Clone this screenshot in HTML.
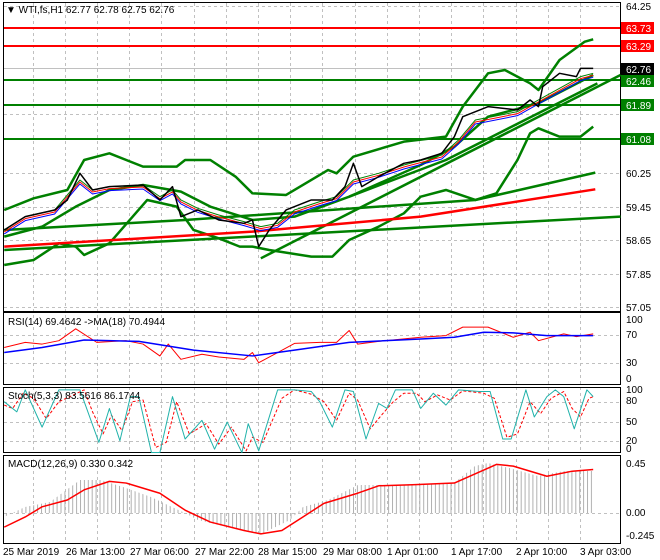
<!DOCTYPE html>
<html><head><meta charset="utf-8"><style>
html,body{margin:0;padding:0;background:#fff;}
svg{display:block;font-family:"Liberation Sans",sans-serif;}
</style></head><body>
<svg width="660" height="560" xmlns="http://www.w3.org/2000/svg">
<defs>
<pattern id="stripes" x="2" y="0" width="3.9" height="10" patternUnits="userSpaceOnUse">
<rect x="0" y="0" width="1" height="10" fill="#b0b0b0"/>
</pattern>
</defs>
<rect width="660" height="560" fill="#fff"/>
<g stroke="#c0c0c0" stroke-dasharray="3,3" stroke-width="1" fill="none">
<path d="M580.5 3V543M548.5 3V543M516.5 3V543M483.5 3V543M451.5 3V543M419.5 3V543M387.5 3V543M355.5 3V543M322.5 3V543M290.5 3V543M258.5 3V543M226.5 3V543M194.5 3V543M161.5 3V543M129.5 3V543M97.5 3V543M65.5 3V543M33.5 3V543"/>
<path d="M4 173.5H620M4 207.5H620M4 240.5H620M4 274.5H620M4 307.5H620M4 6.5H620M4 114.5H620M4 335.5H620M4 363.5H620M4 402.5H620M4 422.5H620M4 441.5H620M4 513.5H620"/>
</g>
<rect x="0" y="311.5" width="660" height="1.5" fill="#fff"/>
<rect x="0" y="385" width="660" height="2.5" fill="#fff"/>
<rect x="0" y="453" width="660" height="2.5" fill="#fff"/>
<!-- panel borders -->
<g fill="none" stroke="#000" stroke-width="1">
<rect x="3.5" y="2.5" width="617" height="309"/>
<rect x="3.5" y="312.5" width="617" height="72"/>
<rect x="3.5" y="387.5" width="617" height="65"/>
<rect x="3.5" y="455.5" width="617" height="88"/>
</g>
<!-- levels -->
<line x1="4" y1="68.5" x2="620" y2="68.5" stroke="#c0c0c0"/>
<g stroke-width="2">
<line x1="4" y1="28" x2="620" y2="28" stroke="#ff0000"/>
<line x1="4" y1="46" x2="620" y2="46" stroke="#ff0000"/>
<line x1="4" y1="80" x2="620" y2="80" stroke="#008000"/>
<line x1="4" y1="105" x2="620" y2="105" stroke="#008000"/>
<line x1="4" y1="139" x2="620" y2="139" stroke="#008000"/>
</g>
<g transform="scale(0.4207,0.3333)" fill="none" stroke-linejoin="round">
<g stroke="#008000" stroke-width="2.5">
<polyline vector-effect="non-scaling-stroke" points="10,750 1475,650"/>
<polyline vector-effect="non-scaling-stroke" points="10,690 440,660 1130,600 1415,518"/>
<polyline vector-effect="non-scaling-stroke" points="620,775 1475,225"/>
<polyline vector-effect="non-scaling-stroke" points="830,590 1060,480 1420,250"/>
<polyline vector-effect="non-scaling-stroke" points="10,630 80,595 160,570 200,480 260,460 340,500 420,500 440,480 500,480 560,530 600,580 680,585 780,510 800,520 840,470 960,425 1060,410 1100,320 1160,220 1200,210 1260,250 1280,270 1330,180 1390,125 1410,118"/>
<polyline vector-effect="non-scaling-stroke" points="10,795 80,780 140,730 180,740 200,765 260,730 350,600 420,620 460,690 520,715 570,740 600,740 640,750 740,770 790,770 830,720 900,680 960,640 1000,590 1060,570 1130,600 1180,580 1230,480 1260,400 1280,385 1330,410 1380,410 1410,380"/>
<polyline vector-effect="non-scaling-stroke" points="10,710 100,680 180,620 260,570 340,555 430,575 500,620 600,660 700,650 830,590 1000,495 1080,440 1160,350 1280,310 1410,225"/>
</g>
<polyline vector-effect="non-scaling-stroke" stroke="#ff0000" stroke-width="2.5" points="10,740 600,695 1000,650 1415,568"/>
<polyline vector-effect="non-scaling-stroke" stroke="#0000ff" stroke-width="1" transform="translate(0,12)" points="10,690 60,650 130,630 190,540 220,570 260,560 340,555 380,590 410,570 430,600 470,625 520,645 580,665 620,680 660,670 700,630 760,605 800,590 840,540 900,520 960,495 1050,465 1090,420 1130,360 1230,335 1280,300 1330,265 1380,230 1410,220"/>
<polyline vector-effect="non-scaling-stroke" stroke="#ff0000" stroke-width="1" transform="translate(0,6)" points="10,690 60,650 130,630 190,540 220,570 260,560 340,555 380,590 410,570 430,600 470,625 520,645 580,665 620,680 660,670 700,630 760,605 800,590 840,540 900,520 960,495 1050,465 1090,420 1130,360 1230,335 1280,300 1330,265 1380,230 1410,220"/>
<polyline vector-effect="non-scaling-stroke" stroke="#008000" stroke-width="1" points="10,690 60,650 130,630 190,540 220,570 260,560 340,555 380,590 410,570 430,600 470,625 520,645 580,665 620,680 660,670 700,630 760,605 800,590 840,540 900,520 960,495 1050,465 1090,420 1130,360 1230,335 1280,300 1330,265 1380,230 1410,220"/>
<polyline vector-effect="non-scaling-stroke" stroke="#000" stroke-width="1.5" points="10,690 60,650 130,630 160,600 190,520 220,570 260,560 340,555 380,600 410,560 430,650 470,630 520,660 580,670 600,660 615,740 640,690 680,630 740,600 790,600 820,560 840,490 860,560 900,530 960,490 1000,480 1050,460 1080,410 1100,350 1160,320 1230,330 1260,300 1280,320 1290,260 1330,220 1370,230 1380,205 1410,205"/>
</g>
<g font-size="10" fill="#000">
<text x="626" y="10">64.25</text>
<text x="626" y="177">60.25</text>
<text x="626" y="211">59.45</text>
<text x="626" y="244">58.65</text>
<text x="626" y="278">57.85</text>
<text x="626" y="311">57.05</text>
</g>
<g font-size="10">
<rect x="621" y="22" width="33" height="12" fill="#ff0000"/><text x="626" y="32" fill="#fff">63.73</text>
<rect x="621" y="40" width="33" height="12" fill="#ff0000"/><text x="626" y="50" fill="#fff">63.29</text>
<rect x="621" y="63" width="33" height="12" fill="#000"/><text x="626" y="73" fill="#fff">62.76</text>
<rect x="621" y="75" width="33" height="12" fill="#008000"/><text x="626" y="85" fill="#fff">62.46</text>
<rect x="621" y="99" width="33" height="12" fill="#008000"/><text x="626" y="109" fill="#fff">61.89</text>
<rect x="621" y="133" width="33" height="12" fill="#008000"/><text x="626" y="143" fill="#fff">61.08</text>
</g>
<text x="6" y="13" font-size="10">&#9660; WTI,fs,H1  62.77 62.78 62.75 62.76</text>
<polygon fill="url(#stripes)" points="4,513 4,517 25,507 50,502 80,480 101,480 126,488 151,497 172,507 185,513 198,520 227,527 261,534 290,520 303,507 328,500 358,485 421,485 454,483 475,466 488,463 513,469 538,476 564,471 594,471 594,513"/>
<g transform="translate(0,300) scale(0.4207,0.339)" fill="none" stroke-linejoin="round">
<polyline vector-effect="non-scaling-stroke" stroke="#ff0000" stroke-width="1" points="10,140 60,125 100,130 140,120 180,85 230,125 300,120 340,130 380,165 400,130 430,175 480,160 520,168 580,175 600,155 615,185 660,155 700,128 760,125 800,125 830,90 850,130 900,122 1000,110 1060,105 1100,80 1160,80 1200,100 1220,110 1260,95 1280,120 1340,100 1370,108 1410,100"/>
<polyline vector-effect="non-scaling-stroke" stroke="#0000ff" stroke-width="1.5" points="10,155 100,140 200,118 330,122 460,148 600,165 700,148 830,125 1000,115 1080,110 1150,95 1220,97 1300,105 1410,105"/>
<polyline vector-effect="non-scaling-stroke" stroke="#ff0000" stroke-width="1" stroke-dasharray="3,2" points="10,310 30,320 55,275 80,290 110,350 140,300 200,265 220,330 245,395 265,340 290,385 315,300 340,295 370,435 395,420 420,300 450,395 490,365 520,425 550,375 585,445 600,405 625,420 670,290 700,265 740,278 770,300 800,355 830,275 850,295 880,380 910,335 935,300 960,275 990,275 1010,300 1040,280 1070,295 1100,268 1150,275 1175,290 1205,405 1230,395 1260,300 1285,335 1310,290 1340,270 1360,320 1380,345 1400,290 1410,285"/>
<polyline vector-effect="non-scaling-stroke" stroke="#20b2aa" stroke-width="1" points="10,300 40,330 60,265 100,375 140,265 190,265 235,420 260,320 285,415 310,285 330,285 360,450 380,450 410,285 440,410 480,355 510,440 540,360 575,450 590,365 615,445 660,265 700,265 740,270 760,300 790,375 820,265 840,270 870,410 900,305 920,320 940,265 980,265 1000,320 1030,275 1060,310 1090,265 1140,270 1165,270 1195,410 1215,410 1250,265 1270,345 1300,285 1320,265 1340,285 1365,380 1395,265 1410,285"/>
<polyline vector-effect="non-scaling-stroke" stroke="#ff0000" stroke-width="1.5" points="10,670 60,640 100,610 160,590 200,560 260,535 300,540 380,570 440,620 500,655 580,680 620,690 670,680 720,640 770,600 850,570 900,548 980,545 1080,540 1180,485 1220,490 1300,520 1360,505 1410,500"/>
</g>
<g font-size="10" fill="#000">
<text x="8" y="325">RSI(14) 69.4642  -&gt;MA(18) 70.4944</text>
<text x="8" y="399">Stoch(5,3,3) 83.5616 86.1744</text>
<text x="8" y="467">MACD(12,26,9) 0.330 0.342</text>
<text x="626" y="323">100</text><text x="626" y="338">70</text><text x="626" y="366">30</text><text x="626" y="382">0</text>
<text x="626" y="393">100</text><text x="626" y="404">80</text><text x="626" y="425">50</text><text x="626" y="444">20</text><text x="626" y="452">0</text>
<text x="626" y="467">0.45</text><text x="626" y="516">0.00</text><text x="626" y="539">-0.245</text>
<text x="3" y="555">25 Mar 2019</text>
<text x="66" y="555">26 Mar 13:00</text>
<text x="130" y="555">27 Mar 06:00</text>
<text x="195" y="555">27 Mar 22:00</text>
<text x="258" y="555">28 Mar 15:00</text>
<text x="323" y="555">29 Mar 08:00</text>
<text x="387" y="555">1 Apr 01:00</text>
<text x="451" y="555">1 Apr 17:00</text>
<text x="516" y="555">2 Apr 10:00</text>
<text x="580" y="555">3 Apr 03:00</text>
</g>
</svg>
</body></html>
